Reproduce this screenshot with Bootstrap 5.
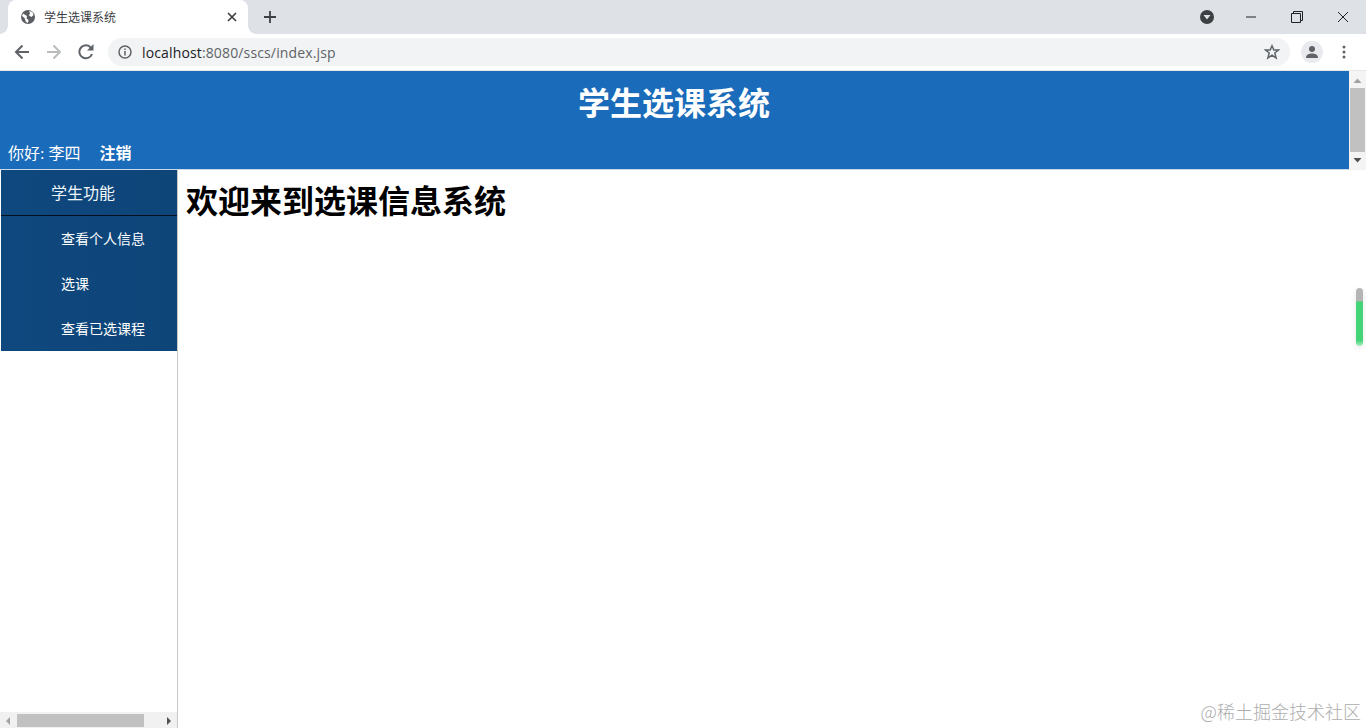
<!DOCTYPE html>
<html lang="zh">
<head>
<meta charset="utf-8">
<title>学生选课系统</title>
<link href="https://cdn.jsdelivr.net/npm/bootstrap@5.3.0/dist/css/bootstrap.min.css" rel="stylesheet">
<style>
html,body{height:100%;overflow:hidden;}
body{font-family:"Noto Sans CJK SC",sans-serif;background:#fff;color:#000;width:1366px;height:728px;position:relative;}
.strip{height:34px;background:#dee1e6;}
.tabbox{flex:none;width:240px;height:34px;margin-left:8px;background:#fff;border-radius:8px 8px 0 0;padding:0 11px 0 12px;font-size:12px;color:#3c4043;position:relative;}
.tabbox::before,.tabbox::after{content:"";position:absolute;bottom:0;width:8px;height:8px;}
.tabbox::before{left:-8px;background:radial-gradient(circle at 0 0,#dee1e6 7.5px,#fff 8px);}
.tabbox::after{right:-8px;background:radial-gradient(circle at 100% 0,#dee1e6 7.5px,#fff 8px);}
.tabtitle{margin-left:8px;width:183px;flex:none;line-height:1;}
.plus{margin-left:16px;}
.winbtns{margin-left:auto;}
.dl{margin-right:14px;}
.winicon{width:46px;height:30px;}
.bar{height:36px;background:#fff;padding:0 13px 0 14px;}
.navicons{gap:16px;width:82px;flex:none;}
.omni{margin-left:12px;width:1182px;flex:none;height:28px;background:#f1f3f4;border-radius:14px;padding:0 10px;font:14px "Open Sans",sans-serif;color:#5f6368;}
.omni b{font-weight:400;color:#202124;}
.urltext{margin-left:10px;letter-spacing:.01em;}
.star{margin-left:auto;}
.avatar{flex:none;width:22px;height:22px;border-radius:50%;background:#e8eaed;margin-left:11px;}
.dots{margin-left:19px;flex:none;}
.topline{height:1px;background:#e4e6e9;}
.headrow{height:99px;}
.headmain{flex:1;height:99px;background:#1a6bb9;color:#fff;padding:0 0 0 8px;border-bottom:1px solid #c9d9ea;}
.systitle{font-size:32px;font-weight:700;line-height:1;text-align:center;margin:0;padding-top:14px;padding-right:9px;height:73px;}
.greet{font-family:"Liberation Serif","Noto Sans CJK SC",serif;font-size:16px;line-height:20px;}
.greet a{color:#fff;font-weight:700;text-decoration:none;margin-left:19px;}
.vbar{width:17px;background:#f4f4f4;padding:6px 1px;}
.vthumb{flex:1;background:#c1c1c1;margin:4px 0 5px;}
.bodyrow{height:559px;}
.side{width:178px;border-right:1px solid #c8c8c8;}
.sidescroll{flex:1;padding-left:1px;}
.sidepanel{width:176px;height:181px;overflow:hidden;background:linear-gradient(90deg,#0f487e,#0e4579);color:#fff;margin-bottom:0;}
.sidehead{height:46px;padding-left:50px;font-size:16px;line-height:44px;border-bottom:1px solid #02101f;color:#f2f6fa;}
.sideitem{height:45px;padding-left:60px;font-size:14px;line-height:45px;color:#fff;}
.hbar{height:17px;background:#f1f1f1;padding:0 5px;}
.hthumb{width:127px;height:13px;background:#c1c1c1;margin-left:6px;margin-right:22px;}
.maincol{flex:1;padding:10px 8px;}
.welcome{font-size:32px;font-weight:700;line-height:38px;margin:0;color:#000;}
.markwater{position:absolute;right:5px;bottom:5px;font:18px/24px "Noto Sans CJK SC",serif;color:#adadad;font-weight:300;}
.pill{position:absolute;left:1356px;top:288px;width:7px;height:58px;border-radius:4px;background:linear-gradient(#b5b5b5 0,#b5b5b5 22%,#43d477 24%,#43d477 90%,#a8ecbf 100%);box-shadow:0 2px 6px rgba(0,0,0,.1);}
</style>
</head>
<body>
<div class="strip d-flex align-items-center">
  <div class="tabbox d-flex align-items-center">
    <svg width="16" height="16" viewBox="0 0 16 16"><circle cx="8" cy="8" r="7" fill="#5a5e63"/><path d="M3 4.500 7 7 6.500 9.500 8.500 11 8 14 6 13 4.500 9 2 7ZM9 2 12.500 3 13.500 6 11.500 8 9 6.500 10 4Z" fill="#fff"/></svg>
    <span class="tabtitle">学生选课系统</span>
    <svg width="10" height="10" viewBox="0 0 10 10"><path d="M1 1 9 9M9 1 1 9" stroke="#3c4043" stroke-width="1.700"/></svg>
  </div>
  <svg class="plus" width="12" height="12" viewBox="0 0 12 12"><path d="M6 0V12M0 6H12" stroke="#3c4043" stroke-width="1.800"/></svg>
  <div class="winbtns d-flex align-items-center">
    <svg class="dl" width="14" height="14" viewBox="0 0 14 14"><circle cx="7" cy="7" r="7" fill="#3c4043"/><path d="M3.500 5H10.500L7 9.500Z" fill="#dee1e6"/></svg>
    <div class="winicon d-flex align-items-center justify-content-center"><svg width="10" height="2" viewBox="0 0 10 2"><path d="M0 1H10" stroke="#202124"/></svg></div>
    <div class="winicon d-flex align-items-center justify-content-center"><svg width="12" height="12" viewBox="0 0 12 12"><path d="M.5 2.500H9.500V11.500H.5ZM2.500 2.500V.5H11.500V9.500H9.500" fill="none" stroke="#202124"/></svg></div>
    <div class="winicon d-flex align-items-center justify-content-center"><svg width="12" height="12" viewBox="0 0 12 12"><path d="M1 1 11 11M11 1 1 11" stroke="#202124"/></svg></div>
  </div>
</div>
<div class="bar d-flex align-items-center">
  <div class="navicons d-flex align-items-center">
    <svg width="16" height="16" viewBox="0 0 16 16"><path d="M15 8H2.500M8.500 1.500 2 8 8.500 14.500" fill="none" stroke="#5f6368" stroke-width="2"/></svg>
    <svg width="16" height="16" viewBox="0 0 16 16"><path d="M1 8H13.500M7.500 1.500 14 8 7.500 14.500" fill="none" stroke="#babcbe" stroke-width="2"/></svg>
    <svg width="16" height="16" viewBox="0 0 16 16"><path d="M14 10A6.500 6.500 0 1 1 13 3.800" fill="none" stroke="#5f6368" stroke-width="2"/><path d="M9 6.500H15.500V0Z" fill="#5f6368"/></svg>
  </div>
  <div class="omni d-flex align-items-center">
    <svg width="14" height="14" viewBox="0 0 14 14"><circle cx="7" cy="7" r="6" fill="none" stroke="#5f6368" stroke-width="1.500"/><path d="M7 6V10.500M7 3.500V5" stroke="#5f6368" stroke-width="1.500"/></svg>
    <span class="urltext"><b>localhost</b>:8080/sscs/index.jsp</span>
    <svg class="star" width="16" height="16" viewBox="0 0 16 16"><path d="M8 1.800 9.800 6H14.500L10.800 9 12.100 14 8 11.200 3.900 14 5.200 9 1.500 6H6.200Z" fill="none" stroke="#5f6368" stroke-width="1.500"/></svg>
  </div>
  <div class="avatar d-flex align-items-center justify-content-center">
    <svg width="14" height="14" viewBox="0 0 14 14"><circle cx="7" cy="4" r="3" fill="#5f6368"/><path d="M1 13C1 9.500 4 8.500 7 8.500S13 9.500 13 13Z" fill="#5f6368"/></svg>
  </div>
  <svg class="dots" width="4" height="14" viewBox="0 0 4 14"><circle cx="2" cy="2" r="1.500" fill="#5f6368"/><circle cx="2" cy="7" r="1.500" fill="#5f6368"/><circle cx="2" cy="12" r="1.500" fill="#5f6368"/></svg>
</div>
<div class="topline"></div>
<div class="headrow d-flex">
  <div class="headmain">
    <h1 class="systitle">学生选课系统</h1>
    <div class="greet">你好: 李四<a href="#">注销</a></div>
  </div>
  <div class="vbar d-flex flex-column align-items-stretch">
    <svg width="15" height="7" viewBox="0 0 15 7"><path d="M3.500 6H11.500L7.500 1.500Z" fill="#a3a3a3"/></svg>
    <div class="vthumb"></div>
    <svg width="15" height="7" viewBox="0 0 15 7"><path d="M3.500 1H11.500L7.500 5.500Z" fill="#505050"/></svg>
  </div>
</div>
<div class="bodyrow d-flex">
  <div class="side d-flex flex-column">
    <div class="sidescroll">
      <div class="sidepanel">
        <div class="sidehead">学生功能</div>
        <div class="sideitem">查看个人信息</div>
        <div class="sideitem">选课</div>
        <div class="sideitem">查看已选课程</div>
      </div>
    </div>
    <div class="hbar d-flex align-items-center">
      <svg width="6" height="8" viewBox="0 0 6 8"><path d="M5 0V8L1 4Z" fill="#a3a3a3"/></svg>
      <div class="hthumb"></div>
      <svg width="6" height="8" viewBox="0 0 6 8"><path d="M1 0V8L5 4Z" fill="#505050"/></svg>
    </div>
  </div>
  <div class="maincol">
    <h2 class="welcome">欢迎来到选课信息系统</h2>
  </div>
</div>
<div class="markwater">@稀土掘金技术社区</div>
<div class="pill"></div>
<script src="https://cdn.jsdelivr.net/npm/bootstrap@5.3.0/dist/js/bootstrap.bundle.min.js"></script>
</body>
</html>
